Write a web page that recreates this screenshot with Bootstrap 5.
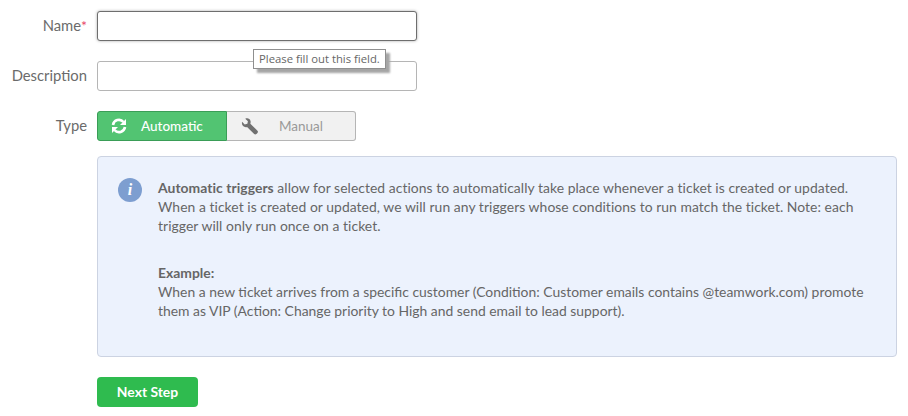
<!DOCTYPE html>
<html lang="en">
<head>
    <meta charset="UTF-8">
    <title>New Trigger</title>
    <link href="https://cdn.jsdelivr.net/npm/bootstrap@5.3.0/dist/css/bootstrap.min.css" rel="stylesheet">
    <style>
        body { font-family: "Lato", "Liberation Sans", sans-serif; color: #666; font-size: 13.9px; background: #fff; }
        .trigger-form { padding: 11px 11px 0 0; width: 908px; }
        .field-row { margin-bottom: 20px; }
        .field-label { width: 87px; margin-right: 10px; text-align: right; font-size: 14.8px; line-height: 29px; flex-shrink: 0; color: #6b6b6b; }
        .req { color: #e8476a; font-size: 14px; line-height: 1; }
        .field-input { width: 320px; height: 30px; border: 1px solid #b5b5b5; border-radius: 3px; padding: 0 8px; background: #fff; outline: 0; display: block; }
        .field-input.is-focus { border-color: #6e6e6e; box-shadow: 0 0 3px rgba(0,0,0,.35); }
        .field-wrap { position: relative; }
        .tip-box { position: absolute; left: 156px; top: 38px; height: 20px; padding: 0 5px; line-height: 18px; font-family: "Open Sans", "Liberation Sans", sans-serif; font-size: 11.3px; color: #666; background: #fff; border: 1px solid #8f8f8f; box-shadow: 4px 4px 2px #a5a5a5; white-space: nowrap; z-index: 5; }
        .type-toggle { width: 259px; height: 30px; }
        .type-opt { height: 30px; font-size: 13.5px; display: flex; align-items: center; border: 1px solid #b5b5b5; }
        .type-auto { width: 130px; background: #52c472; border-color: #3a9d57; color: #fff; border-radius: 3px 0 0 3px; padding-left: 13px; font-weight: 500; }
        .type-man { width: 129px; background: #f1f1f1; border-left: 0; color: #999; border-radius: 0 3px 3px 0; padding-left: 14px; }
        .type-auto svg { margin-right: 14px; }
        .type-man svg { margin-right: 21px; }
        .info-box { width: 800px; height: 201px; margin-left: 97px; background: #ecf2fd; border: 1px solid #ccd3e2; border-radius: 4px; padding: 21px 20px 0 20px; line-height: 19px; }
        .info-icon { width: 24px; height: 24px; border-radius: 50%; background: #7d9ed0; color: #fff; font-family: "Liberation Serif", serif; font-style: italic; font-weight: 700; font-size: 16px; line-height: 24px; text-align: center; flex-shrink: 0; margin-right: 16px; }
        .info-text { width: 715px; }
        .info-text p { margin: 0 0 28px; letter-spacing: .05px; }
        .next-btn { margin: 20px 0 0 97px; width: 101px; height: 30px; background: #2fbb4f; border: 0; border-radius: 4px; color: #fff; font-weight: 700; font-size: 13.9px; padding: 0; display: block; }
    </style>
</head>
<body>
<div class="trigger-form">
    <!-- name -->
    <div class="d-flex field-row">
        <div class="field-label">Name<span class="req">*</span></div>
        <div class="field-wrap">
            <input type="text" class="field-input is-focus" aria-label="Name">
            <div class="tip-box">Please fill out this field.</div>
        </div>
    </div>
    <!-- description -->
    <div class="d-flex field-row">
        <div class="field-label">Description</div>
        <input type="text" class="field-input" aria-label="Description">
    </div>
    <!-- type -->
    <div class="d-flex field-row" style="margin-bottom:15px">
        <div class="field-label">Type</div>
        <div class="d-flex type-toggle">
            <div class="type-opt type-auto">
                <svg width="16" height="16" viewBox="0 0 16 16" fill="none" stroke="#fff" stroke-width="2.6"><path d="M2 7a6 6 0 0 1 10.5-3"/><path d="M14 9a6 6 0 0 1-10.5 3"/><path d="M15 1v6h-6z" fill="#fff" stroke="none"/><path d="M1 15V9h6z" fill="#fff" stroke="none"/></svg>
                Automatic
            </div>
            <div class="type-opt type-man">
                <svg width="17" height="17" viewBox="0 0 16 16"><path d="M1 3.500 3.500 6 6 5.500 6.500 3 4 .7C6-.2 8.500.5 9 3c.2 1 0 1.700-.2 2.300l6.700 6.700c.6.600.6 1.500 0 2.100l-1 1c-.6.600-1.500.6-2.100 0L5.700 8.400C3 9.300.1 7 1 3.500z" fill="#707070"/></svg>
                Manual
            </div>
        </div>
    </div>
    <!-- info -->
    <div class="info-box d-flex">
        <div class="info-icon">i</div>
        <div class="info-text">
            <p><b>Automatic triggers</b> allow for selected actions to automatically take place whenever a ticket is created or updated. When a ticket is created or updated, we will run any triggers whose conditions to run match the ticket. Note: each trigger will only run once on a ticket.</p>
            <div><b>Example:</b></div>
            <div>When a new ticket arrives from a specific customer (Condition: Customer emails contains @teamwork.com) promote them as VIP (Action: Change priority to High and send email to lead support).</div>
        </div>
    </div>
    <button type="button" class="btn next-btn">Next Step</button>
</div>
<script src="https://cdn.jsdelivr.net/npm/bootstrap@5.3.0/dist/js/bootstrap.bundle.min.js"></script>
</body>
</html>
